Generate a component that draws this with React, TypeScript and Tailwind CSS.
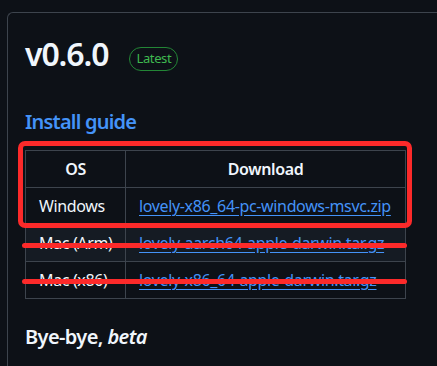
import React from "react";

const rows = [
  { os: "Windows", file: "lovely-x86_64-pc-windows-msvc.zip", alt: false },
  { os: "Mac (Arm)", file: "lovely-aarch64-apple-darwin.tar.gz", alt: true },
  { os: "Mac (x86)", file: "lovely-x86_64-apple-darwin.tar.gz", alt: false },
];

export default function App() {
  return (
    <div
      className="relative h-[366px] w-[437px] overflow-hidden bg-[#0d1117] text-[#f0f6fc]"
      style={{ fontFamily: '"Noto Sans", "Open Sans", sans-serif' }}
    >
      <div className="ml-[7px] mt-[12px] h-[400px] rounded-tl-[6px] border-l border-t border-[#3d444d] pl-[17px] pt-[21px]">
        <div className="flex items-start">
          <h1 className="text-[32px] font-semibold leading-[40px] tracking-[-0.035em]">v0.6.0</h1>
          <span className="ml-[21px] mt-[13px] flex h-[24px] w-[49px] items-center justify-center rounded-full border border-[#238636] text-[13px] tracking-[-0.03em] text-[#3fb950]">
            Latest
          </span>
        </div>

        <h2 className="mt-[35px] text-[20px] font-semibold leading-[25px] tracking-[-0.04em] text-[#4493f8]">
          Install guide
        </h2>

        <table className="mt-[16px] w-[381px] table-fixed border-collapse text-[16px] leading-[24px] tracking-[-0.022em]">
          <colgroup>
            <col className="w-[100px]" />
            <col />
          </colgroup>
          <thead>
            <tr>
              <th className="border border-[#3d444d] px-[13px] py-[6px] text-center font-semibold">OS</th>
              <th className="border border-[#3d444d] px-[13px] py-[6px] text-center font-semibold">Download</th>
            </tr>
          </thead>
          <tbody>
            {rows.map((r) => (
              <tr key={r.os} className={r.alt ? "bg-[#151b23]" : ""}>
                <td className="whitespace-nowrap border border-[#3d444d] px-[13px] py-[6px]">{r.os}</td>
                <td className="whitespace-nowrap border border-[#3d444d] px-[13px] py-[6px]">
                  <a className="text-[#4493f8] underline underline-offset-[3px]" href="#">
                    {r.file}
                  </a>
                </td>
              </tr>
            ))}
          </tbody>
        </table>

        <h3 className="mt-[25px] text-[20px] font-semibold leading-[25px] tracking-[-0.03em]">
          Bye-bye, <em className="italic">beta</em>
        </h3>
      </div>

      {/* annotations */}
      <div className="pointer-events-none absolute left-[18px] top-[141px] h-[87px] w-[394px] rounded-[7px] border-[5px] border-[#fc2a2a]" />
      <div className="pointer-events-none absolute left-[22px] top-[243px] h-[5px] w-[385px] rounded-full bg-[#fc2a2a]" />
      <div className="pointer-events-none absolute left-[22px] top-[279px] h-[5px] w-[385px] rounded-full bg-[#fc2a2a]" />
    </div>
  );
}
